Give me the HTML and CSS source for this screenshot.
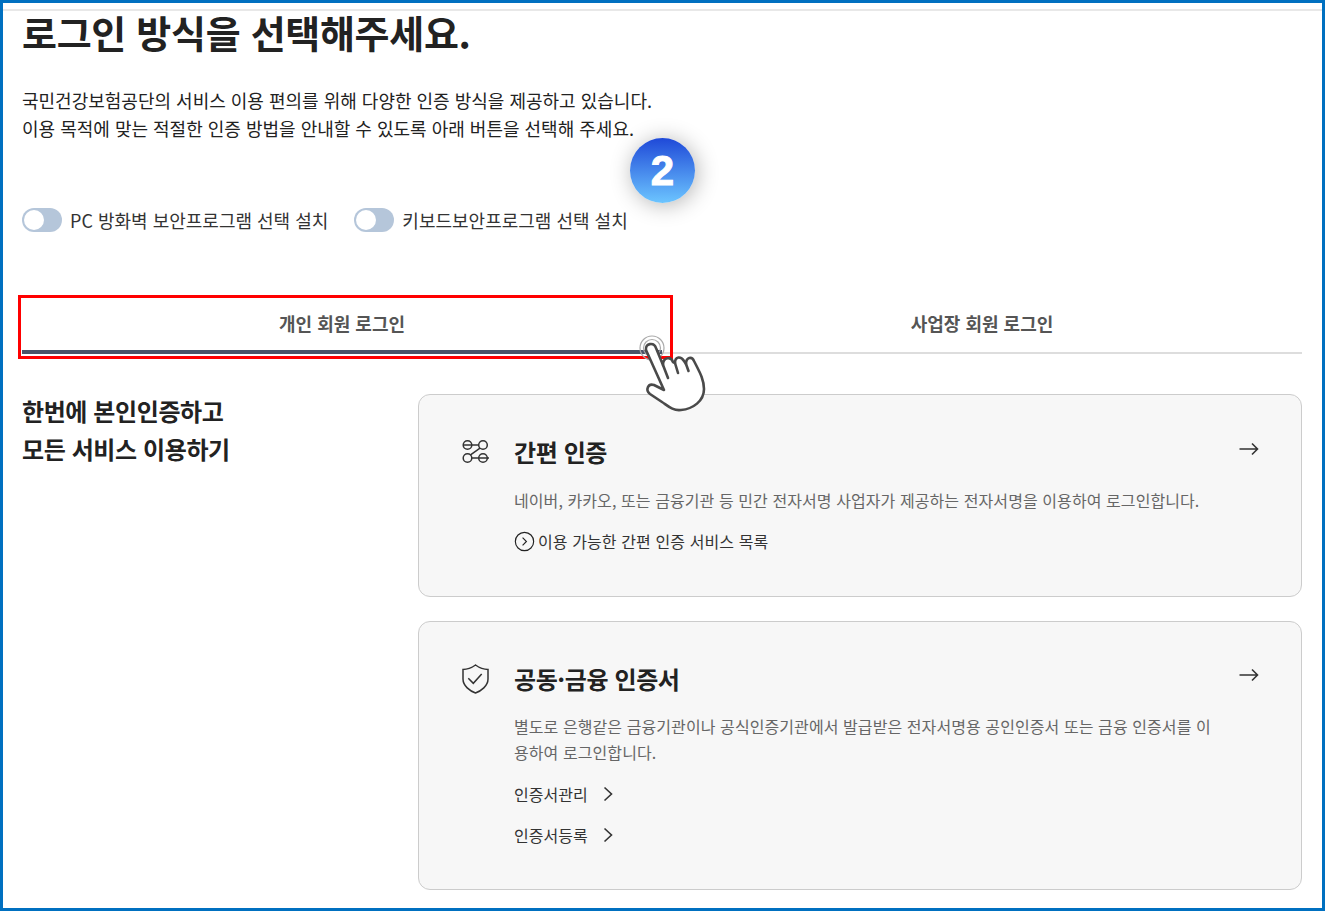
FILE: index.html
```html
<!DOCTYPE html>
<html lang="ko">
<head>
<meta charset="utf-8">
<title>로그인 방식 선택</title>
<link rel="stylesheet" href="styles.css">
</head>
<body>
<div class="frame">
  <div class="topline"></div>
  <main class="content">
    <h1 class="title">로그인 방식을 선택해주세요.</h1>
    <p class="intro">국민건강보험공단의 서비스 이용 편의를 위해 다양한 인증 방식을 제공하고 있습니다.<br>이용 목적에 맞는 적절한 인증 방법을 안내할 수 있도록 아래 버튼을 선택해 주세요.</p>
    <div class="toggles">
      <label class="toggle"><span class="switch"><span class="knob"></span></span>PC 방화벽 보안프로그램 선택 설치</label>
      <label class="toggle"><span class="switch"><span class="knob"></span></span>키보드보안프로그램 선택 설치</label>
    </div>
    <div class="tabs">
      <div class="tab active">개인 회원 로그인</div>
      <div class="tab">사업장 회원 로그인</div>
    </div>
    <div class="columns">
      <h2 class="lead">한번에 본인인증하고<br>모든 서비스 이용하기</h2>
      <div class="cards">
        <section class="card card-simple">
          <svg class="card-icon" viewBox="0 0 30 30" fill="none" stroke="#333" stroke-width="1.5">
            <circle cx="6.500" cy="8" r="4.300"/><circle cx="22" cy="8" r="4.300"/><circle cx="6.500" cy="21" r="4.300"/><circle cx="22" cy="21" r="4.300"/>
            <path d="M2.200 8H17.700M19 11.200L9.500 17.800M10.800 21H28"/>
          </svg>
          <div class="card-body">
            <h3 class="card-title">간편 인증</h3>
            <p class="card-text">네이버, 카카오, 또는 금융기관 등 민간 전자서명 사업자가 제공하는 전자서명을 이용하여 로그인합니다.</p>
            <a class="service-link"><svg class="circle-chevron" viewBox="0 0 22 22" fill="none" stroke="#222" stroke-width="1.2"><circle cx="11" cy="11" r="9.6"/><path d="M9 7l4 4-4 4"/></svg>이용 가능한 간편 인증 서비스 목록</a>
          </div>
          <svg class="arrow" viewBox="0 0 20 14" fill="none" stroke="#333" stroke-width="1.6"><path d="M0.500 7H18.500M13 1.500L18.500 7L13 12.500"/></svg>
        </section>
        <section class="card card-cert">
          <svg class="card-icon" viewBox="0 0 30 30" fill="none" stroke="#333" stroke-width="1.5">
            <path d="M14.500 1C18 3.500 22 5.500 27 5.500V15C27 22 20 27 14.500 29C9 27 2 22 2 15V5.500C7 5.500 11 3.500 14.500 1Z"/><path d="M7.300 14.300L12.300 19.300L20.700 10"/>
          </svg>
          <div class="card-body">
            <h3 class="card-title">공동·금융 인증서</h3>
            <p class="card-text">별도로 은행같은 금융기관이나 공식인증기관에서 발급받은 전자서명용 공인인증서 또는 금융 인증서를 이용하여 로그인합니다.</p>
            <a class="cert-link">인증서관리<svg class="chevron" viewBox="0 0 10 16" fill="none" stroke="#333" stroke-width="1.6"><path d="M1.500 1.500L8.500 8L1.500 14.500"/></svg></a>
            <a class="cert-link">인증서등록<svg class="chevron" viewBox="0 0 10 16" fill="none" stroke="#333" stroke-width="1.6"><path d="M1.500 1.500L8.500 8L1.500 14.500"/></svg></a>
          </div>
          <svg class="arrow" viewBox="0 0 20 14" fill="none" stroke="#333" stroke-width="1.6"><path d="M0.500 7H18.500M13 1.500L18.500 7L13 12.500"/></svg>
        </section>
      </div>
    </div>
  </main>
  <div class="badge">2</div>
  <div class="highlight"></div>
  <svg class="hand" viewBox="0 0 76 84">
    <circle cx="19" cy="18" r="12" fill="none" stroke="#aaa" stroke-width="1.200"/>
    <circle cx="19" cy="18" r="8.500" fill="none" stroke="#aaa" stroke-width="1.200"/>
    <g transform="translate(-2 -1)">
      <path d="M15 21C14 14 23 13 25 19L32 36C32 28 40 27 42 33L44 34C44 27 50 27 53 32L55 35C55 28 61 27 63 32C68 42 73 50 73 60C73 72 62 80 50 81C42 82 37 77 31 73L19 65C14 61 17 54 23 56L33 61Z" fill="#fff" stroke="#4a4a4a" stroke-width="2.600" stroke-linejoin="round"/>
      <path d="M32 36L37 49M44 34L47 44M55 35L57.500 42" fill="none" stroke="#4a4a4a" stroke-width="2.600" stroke-linecap="round"/>
    </g>
  </svg>
</div>
</body>
</html>
```
FILE: styles.css
```css
* { box-sizing: border-box; }
html, body { margin: 0; padding: 0; }
body {
  font-family: "Noto Sans CJK KR", "Noto Sans", sans-serif;
  color: #222;
  background: #fff;
}
.frame {
  position: relative;
  width: 1325px;
  height: 911px;
  border: 3px solid #0070c0;
  overflow: hidden;
}
.topline { height: 2px; margin-top: 6px; background: #e8e8e8; }
.content { padding: 0 20px 0 19px; }
.title {
  margin: -3px 0 0;
  font-size: 38px;
  line-height: 48px;
  font-weight: 700;
  letter-spacing: -0.3px;
  color: #222;
}
.intro {
  margin: 30px 0 0;
  font-size: 18px;
  line-height: 28px;
  color: #222;
}
.toggles { display: flex; gap: 26px; margin-top: 66px; height: 24px; }
.toggle { display: flex; align-items: center; gap: 8px; font-size: 18px; color: #333; }
.switch { display: block; width: 40px; height: 24px; border-radius: 12px; background: #b5c6da; padding: 2px; }
.knob { display: block; width: 20px; height: 20px; border-radius: 50%; background: #fff; }
.tabs { display: flex; margin-top: 63px; height: 59px; }
.tab {
  flex: 1;
  display: flex;
  align-items: center;
  justify-content: center;
  padding: 0 0 2px;
  border-bottom: 2px solid #ddd;
  font-size: 18px;
  font-weight: 700;
  color: #555;
}
.tab.active { border-bottom: 4px solid #4a5468; padding-bottom: 0; }
.columns { display: flex; margin-top: 40px; }
.lead {
  width: 396px;
  flex: none;
  margin: -2px 0 0;
  font-size: 24px;
  line-height: 38px;
  font-weight: 700;
  letter-spacing: -0.4px;
  color: #222;
}
.cards { flex: 1; display: flex; flex-direction: column; gap: 24px; }
.card {
  display: flex;
  align-items: flex-start;
  background: #f7f7f7;
  border: 1px solid #ccc;
  border-radius: 12px;
  padding: 40px 42px 0 42px;
}
.card-simple { height: 203px; }
.card-cert { height: 269px; }
.card-icon { width: 30px; height: 30px; flex: none; margin: 2px 23px 0 0; }
.card-body { flex: 1; }
.card-title {
  margin: 0;
  font-size: 24px;
  line-height: 34px;
  font-weight: 700;
  letter-spacing: -0.4px;
  color: #222;
}
.card-text {
  margin: 18px 0 0;
  font-size: 16px;
  line-height: 26px;
  letter-spacing: 0.08px;
  color: #666;
  max-width: 700px;
  word-break: break-all;
}
.card-cert .card-text { margin-top: 17px; }
.service-link { display: flex; align-items: center; gap: 3px; margin-top: 15px; font-size: 16px; line-height: 26px; letter-spacing: 0.1px; color: #333; }
.circle-chevron { width: 21px; height: 21px; flex: none; }
.cert-link { display: flex; align-items: center; gap: 15px; margin-top: 15px; font-size: 16px; line-height: 26px; color: #333; }
.card-text + .cert-link { margin-top: 16px; }
.chevron { width: 10px; height: 16px; flex: none; }
.arrow { width: 20px; height: 14px; flex: none; margin-top: 7px; }
.card-cert .arrow { margin-top: 6px; }
.badge {
  position: absolute;
  left: 627px;
  top: 135px;
  width: 65px;
  height: 65px;
  border-radius: 50%;
  background: linear-gradient(#1f49d8, #6cc5ff);
  box-shadow: 2px 2px 22px rgba(0, 0, 0, 0.3);
  color: #fff;
  font-family: "Liberation Sans", sans-serif;
  font-weight: 700;
  font-size: 42px;
  line-height: 65px;
  text-align: center;
  -webkit-text-stroke: 1px #fff;
}
.highlight {
  position: absolute;
  left: 15px;
  top: 292px;
  width: 655px;
  height: 64px;
  border: 3px solid #f00;
}
.hand { position: absolute; left: 630px; top: 327px; width: 76px; height: 84px; }
```
